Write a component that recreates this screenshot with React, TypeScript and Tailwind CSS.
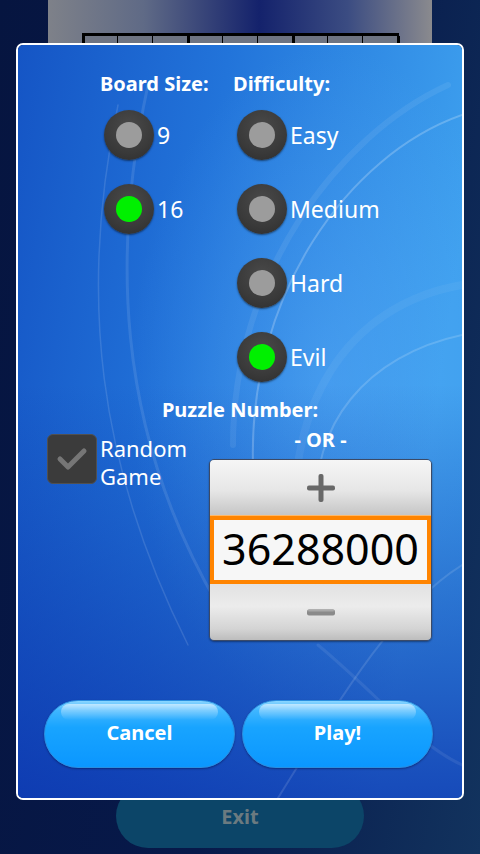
import type { ReactNode } from 'react';

const font = "font-['Noto_Sans','Open_Sans',sans-serif]";

function Radio({ on, label }: { on?: boolean; label: string }) {
  return (
    <div className="flex items-center">
      <div className="ml-[4px] flex h-[50px] w-[50px] items-center justify-center rounded-full bg-[radial-gradient(circle_at_50%_35%,#4a4a4a_0%,#3a3a3a_60%,#2c2c2c_100%)] shadow-[0_1px_2px_rgba(0,0,0,0.5)]">
        <div
          className={`h-[26px] w-[26px] rounded-full ${
            on ? 'bg-[#00f000]' : 'bg-[#9c9c9c]'
          }`}
        />
      </div>
      <span className="ml-[3px] text-[23px] leading-[28px] text-white">{label}</span>
    </div>
  );
}

function Column({ title, children, width }: { title: string; children: ReactNode; width: string }) {
  return (
    <div className={width}>
      <div className="h-[24px] text-[20px] font-bold leading-[24px] text-white">{title}</div>
      <div className="mt-[14px] flex flex-col gap-[24px]">{children}</div>
    </div>
  );
}

function PillButton({ label }: { label: string }) {
  return (
    <button
      type="button"
      className="relative h-[68px] w-[191px] overflow-hidden rounded-full border border-[#2a8fe0] bg-[linear-gradient(180deg,#8ad6ff_0%,#40b6ff_14%,#18a4ff_40%,#0b97ff_100%)] pb-[3px] text-[20px] font-bold text-white shadow-[0_1px_2px_rgba(0,0,40,0.4)]"
    >
      <span className="pointer-events-none absolute left-[16px] right-[16px] top-[3px] h-[16px] rounded-full bg-[linear-gradient(180deg,rgba(255,255,255,0.55),rgba(255,255,255,0))]" />
      <span className="relative">{label}</span>
    </button>
  );
}

function Wallpaper() {
  return (
    <svg className="absolute inset-0 h-full w-full" viewBox="0 0 444 753" preserveAspectRatio="none">
      <defs>
        <linearGradient id="wpBase" x1="0" y1="0" x2="1" y2="0.25">
          <stop offset="0" stopColor="#1555c5" />
          <stop offset="0.45" stopColor="#2274da" />
          <stop offset="1" stopColor="#3d9fee" />
        </linearGradient>
        <linearGradient id="wpDark" x1="0" y1="0" x2="0" y2="1">
          <stop offset="0.45" stopColor="#0a2fa0" stopOpacity="0" />
          <stop offset="1" stopColor="#0a2ea8" stopOpacity="0.75" />
        </linearGradient>
        <radialGradient id="wpGlow" cx="0.7" cy="0.45" r="0.45">
          <stop offset="0" stopColor="#6ab8ff" stopOpacity="0.35" />
          <stop offset="1" stopColor="#6ab8ff" stopOpacity="0" />
        </radialGradient>
      </defs>
      <rect width="444" height="753" fill="url(#wpBase)" />
      <rect width="444" height="753" fill="url(#wpGlow)" />
      <rect width="444" height="753" fill="url(#wpDark)" />
      <g fill="none" stroke="#ffffff" strokeLinecap="round">
        <path d="M444 70 C330 110 230 250 235 420" strokeWidth="2" opacity="0.22" />
        <path d="M430 40 C320 90 215 230 215 400" strokeWidth="6" opacity="0.07" />
        <path d="M130 40 C95 200 95 380 200 560" strokeWidth="3" opacity="0.1" />
        <path d="M100 60 C60 250 80 420 170 600" strokeWidth="1.5" opacity="0.12" />
        <path d="M444 290 C350 310 290 380 300 470" strokeWidth="2" opacity="0.16" />
        <path d="M444 240 C330 260 260 360 280 520" strokeWidth="8" opacity="0.05" />
        <path d="M444 520 C380 560 330 640 260 753" strokeWidth="2" opacity="0.12" />
        <path d="M300 600 C360 650 400 700 444 720" strokeWidth="3" opacity="0.08" />
      </g>
    </svg>
  );
}

function NumberPicker() {
  return (
    <div className="w-[223px] overflow-hidden rounded-[5px] border border-[#3c4a66] shadow-[0_1px_2px_rgba(0,0,0,0.4)]">
      <div className="flex h-[56px] items-center justify-center bg-[linear-gradient(180deg,#f6f6f6_0%,#e6e6e6_55%,#c4c4c4_100%)]">
        <svg width="28" height="28" viewBox="0 0 28 28">
          <rect x="0" y="11.5" width="28" height="5" rx="2" fill="#686868" />
          <rect x="11.5" y="0" width="5" height="28" rx="2" fill="#686868" />
        </svg>
      </div>
      <div className="flex h-[68px] items-center justify-center border-[4px] border-[#ff8400] bg-[#f7f7f7] shadow-[0_0_0_1px_#ffb868]">
        <span className="-mt-[3px] text-[43px] leading-none text-black">36288000</span>
      </div>
      <div className="flex h-[56px] items-center justify-center bg-[linear-gradient(180deg,#e2e2e2_0%,#ececec_40%,#d4d4d4_80%,#bdbdbd_100%)]">
        <svg width="28" height="7" viewBox="0 0 28 7">
          <rect x="0" y="0.5" width="28" height="6" rx="2" fill="#8a8a8a" />
          <rect x="1" y="0.5" width="26" height="2" rx="1" fill="#a8a8a8" />
        </svg>
      </div>
    </div>
  );
}

export default function App() {
  const gridLines = [82, 117, 152, 187, 222, 257, 292, 327, 362, 397];
  return (
    <div
      className={`${font} relative flex h-[854px] w-[480px] flex-col justify-between overflow-hidden bg-[linear-gradient(100deg,#061540_0%,#07194a_55%,#12335e_100%)]`}
    >
      {/* main screen behind the dialog */}
      <div className="mx-[48px] h-[60px] bg-[linear-gradient(90deg,#7e8189_0%,#5f6a86_25%,#14226c_55%,#3b4c82_78%,#8a8a8e_100%)] pt-[33px]">
        <div className="relative ml-[34px] h-[27px] w-[317px] border-t-[3px] border-black bg-[#6e7482]">
          {gridLines.map((x, i) => (
            <div
              key={x}
              className={`absolute top-0 h-full bg-black ${i % 3 === 0 ? 'w-[3px]' : 'w-[1px]'}`}
              style={{ left: x - 82 }}
            />
          ))}
        </div>
      </div>

      <div className="mb-[6px] flex justify-center">
        <div className="flex h-[64px] w-[248px] items-center justify-center rounded-full bg-[#0c4568] pt-[2px] text-[20px] font-bold text-[#6b7a80]">
          Exit
        </div>
      </div>

      {/* dialog */}
      <div className="absolute left-[16px] top-[43px] h-[757px] w-[448px] overflow-hidden rounded-[7px] border-2 border-white">
        <Wallpaper />
        <div className="relative flex h-full flex-col">
          <div className="flex pl-[82px] pt-[27px]">
            <Column title="Board Size:" width="w-[133px]">
              <Radio label="9" />
              <Radio label="16" on />
            </Column>
            <Column title="Difficulty:" width="w-[200px]">
              <Radio label="Easy" />
              <Radio label="Medium" />
              <Radio label="Hard" />
              <Radio label="Evil" on />
            </Column>
          </div>

          <div className="mt-[16px] h-[24px] text-center text-[20px] font-bold leading-[24px] text-white">
            Puzzle Number:
          </div>

          <div className="flex items-start justify-between pl-[29px] pr-[30px]">
            <div className="mt-[12px] flex items-start">
              <div className="flex h-[50px] w-[50px] items-center justify-center rounded-[6px] border border-[#505050] bg-[#3b3b3b]">
                <svg width="34" height="28" viewBox="0 0 34 28">
                  <path
                    d="M5 14 L13 22 L29 6"
                    fill="none"
                    stroke="#767676"
                    strokeWidth="5"
                    strokeLinecap="round"
                    strokeLinejoin="round"
                  />
                </svg>
              </div>
              <div className="ml-[3px] text-[22px] leading-[28px] text-white">
                Random
                <br />
                Game
              </div>
            </div>
            <div className="mt-[6px] flex flex-col items-center">
              <div className="h-[24px] text-[20px] font-bold leading-[24px] text-white">- OR -</div>
              <div className="mt-[7px]">
                <NumberPicker />
              </div>
            </div>
          </div>

          <div className="mt-[59px] flex gap-[7px] pl-[26px]">
            <PillButton label="Cancel" />
            <PillButton label="Play!" />
          </div>
        </div>
      </div>
    </div>
  );
}
